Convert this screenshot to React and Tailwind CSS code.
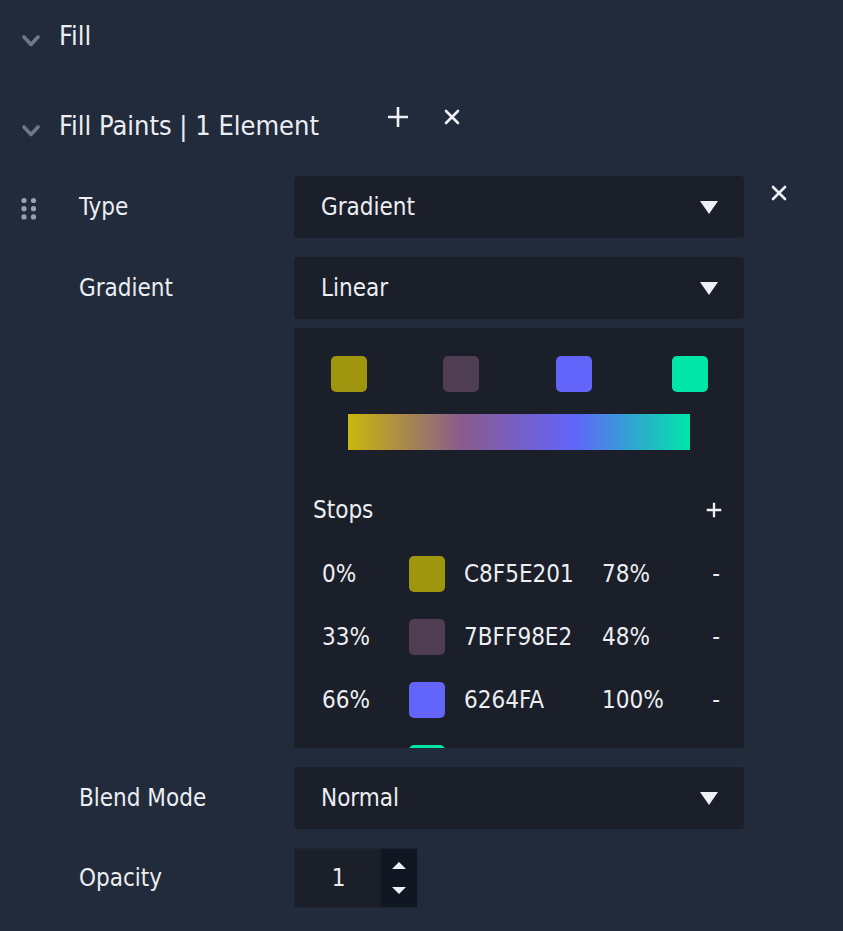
import React from "react";

const FONT = { fontFamily: '"DejaVu Sans Condensed", "DejaVu Sans", sans-serif', fontStretch: "condensed" };

function Chevron() {
  return (
    <svg width="18" height="12" viewBox="0 0 18 12" className="shrink-0">
      <polyline points="2,2 9,9.5 16,2" fill="none" stroke="#7d8697" strokeWidth="3.6" strokeLinecap="round" strokeLinejoin="round" opacity="0.85" />
    </svg>
  );
}

function DragHandle() {
  const dots = [];
  for (let r = 0; r < 3; r++) for (let c = 0; c < 2; c++) dots.push(<circle key={r + "-" + c} cx={3 + c * 9.5} cy={3.5 + r * 8.2} r="2.6" fill="#9aa1ad" />);
  return (
    <svg width="16" height="24" viewBox="0 0 16 24">
      {dots}
    </svg>
  );
}

function XIcon({ size = 16 }) {
  return (
    <svg width={size} height={size} viewBox="0 0 16 16">
      <path d="M2 2 L14 14 M14 2 L2 14" stroke="#eef0f3" strokeWidth="2.6" strokeLinecap="round" />
    </svg>
  );
}

function PlusIcon({ size = 22, sw = 2.6 }) {
  return (
    <svg width={size} height={size} viewBox="0 0 22 22">
      <path d="M11 1 V21 M1 11 H21" stroke="#eef0f3" strokeWidth={sw} />
    </svg>
  );
}

function Caret() {
  return (
    <svg width="18" height="13" viewBox="0 0 18 13">
      <polygon points="0,0 18,0 9,13" fill="#eef0f3" />
    </svg>
  );
}

function Select({ value }) {
  return (
    <div className="h-[62px] w-[450px] rounded-[4px] bg-[#1a1f29] flex items-center justify-between pl-[27px] pr-[26px] text-[24px] text-[#eceef2]">
      <span>{value}</span>
      <Caret />
    </div>
  );
}

const stops = [
  { pos: "0%", color: "#a0950f", hex: "C8F5E201", op: "78%", left: 55 },
  { pos: "33%", color: "#4f3d53", hex: "7BFF98E2", op: "48%", left: 167 },
  { pos: "66%", color: "#6264fa", hex: "6264FA", op: "100%", left: 280 },
  { pos: "100%", color: "#00e6a9", hex: "00E6A9", op: "100%", left: 396 },
];

function Swatch({ color }) {
  return <div className="h-[36px] w-[36px] rounded-[5px]" style={{ backgroundColor: color }} />;
}

export default function App() {
  return (
    <div className="w-[843px] h-[931px] overflow-hidden bg-[#222b3b] text-[#eceef2]" style={FONT}>
      {/* Fill header */}
      <div className="h-[72px] flex items-center pl-[22px] gap-[19px]">
        <div className="pt-[10px]"><Chevron /></div>
        <span className="text-[27px]">Fill</span>
      </div>
      {/* Fill Paints header */}
      <div className="mt-[18px] h-[72px] flex items-center pl-[22px]">
        <div className="pt-[10px]"><Chevron /></div>
        <span className="ml-[19px] text-[27px] w-[328px] whitespace-nowrap">Fill Paints | 1 Element</span>
        <div className="-mt-[18px] flex items-center">
          <PlusIcon />
          <div className="ml-[35px]"><XIcon /></div>
        </div>
      </div>

      {/* items */}
      <div className="mt-[14px] grid grid-cols-[79px_215px_450px_1fr] text-[24px]">
        {/* Type row */}
        <div className="pl-[21px] pt-[21px]"><DragHandle /></div>
        <div className="h-[62px] flex items-center">Type</div>
        <Select value="Gradient" />
        <div className="pl-[27px] pt-[9px]"><XIcon /></div>

        {/* Gradient row */}
        <div className="mt-[19px]" />
        <div className="mt-[19px] h-[62px] flex items-center">Gradient</div>
        <div className="mt-[19px]"><Select value="Linear" /></div>
        <div className="mt-[19px]" />

        {/* Gradient panel */}
        <div />
        <div />
        <div className="mt-[9px] h-[420px] overflow-hidden bg-[#1a1f29]">
          <div className="relative mt-[28px] h-[36px]">
            {stops.map((s) => (
              <div key={s.pos} className="absolute top-0" style={{ left: s.left - 18 }}>
                <Swatch color={s.color} />
              </div>
            ))}
          </div>
          <div
            className="mt-[22px] ml-[54px] h-[36px] w-[342px]"
            style={{ background: "linear-gradient(90deg, #c8b80c 0%, #8a5b8c 33%, #6264fa 66%, #00e6a9 100%)" }}
          />
          <div className="mt-[28px] h-[64px] flex items-center justify-between pl-[19px] pr-[22px]">
            <span>Stops</span>
            <PlusIcon size={16} sw={3.2} />
          </div>
          {stops.slice(0, 3).map((s) => (
            <div key={s.pos} className="h-[63px] grid grid-cols-[87px_55px_138px_1fr_auto] items-center pl-[28px] pr-[24px]">
              <span>{s.pos}</span>
              <Swatch color={s.color} />
              <span>{s.hex}</span>
              <span>{s.op}</span>
              <span>-</span>
            </div>
          ))}
          <div className="h-[63px] grid grid-cols-[87px_55px_138px_1fr_auto] items-center pl-[28px] pr-[24px]">
            <span />
            <Swatch color={stops[3].color} />
          </div>
        </div>
        <div />

        {/* Blend mode */}
        <div className="mt-[19px]" />
        <div className="mt-[19px] h-[62px] flex items-center">Blend Mode</div>
        <div className="mt-[19px]"><Select value="Normal" /></div>
        <div className="mt-[19px]" />

        {/* Opacity */}
        <div className="mt-[19px]" />
        <div className="mt-[19px] h-[60px] flex items-center">Opacity</div>
        <div className="mt-[19px]">
          <div className="h-[60px] w-[124px] flex border border-[#1e2431] bg-[#1a1f29]">
            <div className="flex-1 flex items-center justify-center pl-[1px]">1</div>
            <div className="w-[36px] bg-[#111623] flex flex-col items-center justify-center gap-[18px]">
              <svg width="14" height="7" viewBox="0 0 14 7"><polygon points="7,0 14,7 0,7" fill="#eef0f3" /></svg>
              <svg width="14" height="7" viewBox="0 0 14 7"><polygon points="0,0 14,0 7,7" fill="#eef0f3" /></svg>
            </div>
          </div>
        </div>
        <div className="mt-[19px]" />
      </div>
    </div>
  );
}
